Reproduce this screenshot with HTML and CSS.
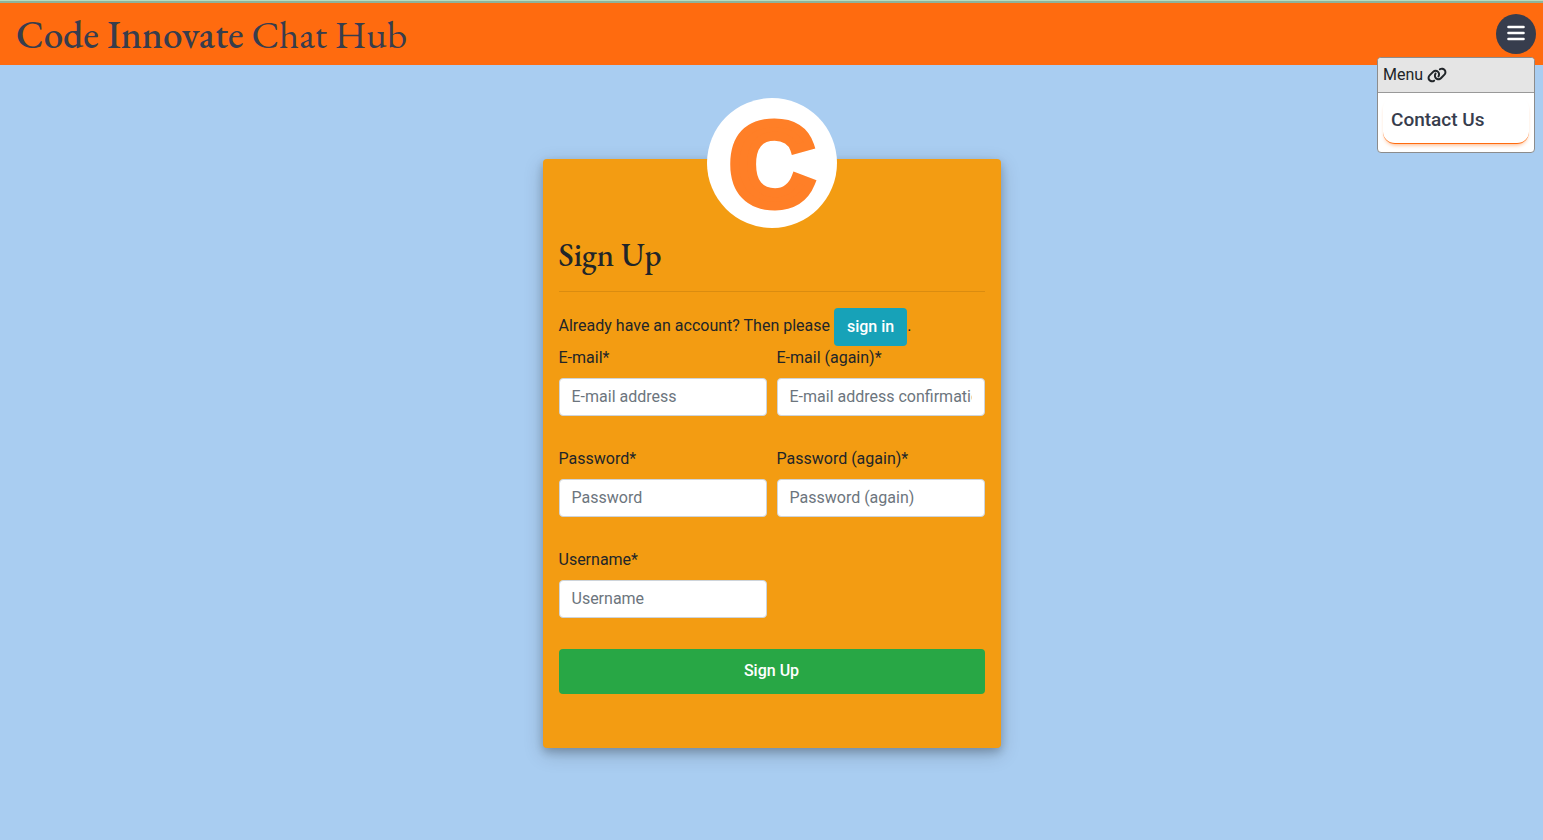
FILE: index.html
```html
<!DOCTYPE html>
<html lang="en">
<head>
<meta charset="utf-8">
<meta name="viewport" content="width=device-width, initial-scale=1">
<title>Code Innovate Chat Hub</title>
<link rel="stylesheet" href="styles.css">
</head>
<body>
<header class="topbar">
  <a class="brand" href="#"><span class="brand-strong">Code Innovate</span> Chat Hub</a>
  <div class="menu">
    <button class="menu-toggle" type="button" aria-label="Menu" aria-expanded="true">
      <svg width="18" height="16" viewBox="0 0 18 16" fill="none" stroke="currentColor" stroke-width="2.6" stroke-linecap="round"><path d="M1.5 2h15M1.5 8h15M1.5 14h15"/></svg>
    </button>
    <nav class="dropdown">
      <div class="dropdown-title">Menu
        <svg class="link-icon" width="20" height="16" viewBox="0 0 640 512" fill="currentColor" aria-hidden="true"><path d="M579.8 267.7c56.500-56.500 56.500-148 0-204.500c-50-50-128.800-56.500-186.300-15.400l-1.600 1.100c-14.400 10.300-17.700 30.300-7.400 44.600s30.300 17.700 44.600 7.400l1.600-1.100c32.100-22.900 76-19.300 103.800 8.600c31.500 31.500 31.500 82.500 0 114L422.300 334.800c-31.500 31.500-82.500 31.500-114 0c-27.900-27.900-31.500-71.800-8.600-103.800l1.100-1.600c10.300-14.400 6.900-34.400-7.400-44.600s-34.400-6.900-44.600 7.400l-1.100 1.600C206.500 251.200 213 330 263 380c56.500 56.500 148 56.500 204.500 0L579.800 267.700zM60.200 244.300c-56.500 56.500-56.500 148 0 204.500c50 50 128.800 56.500 186.300 15.400l1.600-1.100c14.400-10.300 17.700-30.300 7.400-44.600s-30.300-17.700-44.600-7.400l-1.600 1.100c-32.100 22.900-76 19.300-103.800-8.600C74 372 74 321 105.500 289.500L217.700 177.200c31.500-31.500 82.500-31.500 114 0c27.900 27.900 31.500 71.800 8.600 103.900l-1.100 1.600c-10.300 14.400-6.900 34.400 7.400 44.600s34.400 6.900 44.600-7.400l1.100-1.600C433.500 260.800 427 182 377 132c-56.500-56.500-148-56.500-204.500 0L60.200 244.300z"/></svg>
      </div>
      <a class="dropdown-item" href="#">Contact Us</a>
    </nav>
  </div>
</header>

<main class="page">
  <section class="card">
    <svg class="logo" width="130" height="130" viewBox="0 0 130 130" role="img" aria-label="Code Innovate">
      <circle cx="65" cy="65" r="65" fill="#fff"/>
      <text class="logo-letter" x="65" y="107" text-anchor="middle">C</text>
    </svg>
    <h1 class="card-title">Sign Up</h1>
    <hr class="rule">
    <p class="hint">Already have an account? Then please <a class="btn btn-info" href="#">sign in</a>.</p>
    <form class="form">
      <div class="field"><label for="email">E-mail*</label><input id="email" type="email" placeholder="E-mail address"></div>
      <div class="field"><label for="email2">E-mail (again)*</label><input id="email2" type="email" placeholder="E-mail address confirmation"></div>
      <div class="field"><label for="pw">Password*</label><input id="pw" type="password" placeholder="Password"></div>
      <div class="field"><label for="pw2">Password (again)*</label><input id="pw2" type="password" placeholder="Password (again)"></div>
      <div class="field"><label for="user">Username*</label><input id="user" type="text" placeholder="Username"></div>
      <button class="btn btn-submit" type="submit">Sign Up</button>
    </form>
  </section>
</main>
</body>
</html>
```
FILE: styles.css
```css
* { box-sizing: border-box; }

body {
  margin: 0;
  min-height: 100vh;
  background: #a9cdf1;
  color: #212529;
  font-family: Roboto, "Liberation Sans", sans-serif;
  font-size: 16px;
  font-weight: 400;
  line-height: 24px;
}

.topbar {
  display: flex;
  align-items: center;
  justify-content: space-between;
  height: 65px;
  padding: 3px 7px 0 16px;
  background: linear-gradient(#b9dcc0 1px, #8fb39a 1px, #8fb39a 3px, #ff6b0f 3px);
}

.brand {
  padding-top: 2px;
  color: #373d4d;
  font-family: "EB Garamond", "Liberation Serif", serif;
  font-size: 39px;
  line-height: 48px;
  font-weight: 400;
  text-decoration: none;
}

.brand-strong { font-weight: 500; }

.menu { position: relative; }

.menu-toggle {
  display: flex;
  align-items: center;
  justify-content: center;
  width: 40px;
  height: 40px;
  padding: 0 0 2px;
  border: 0;
  border-radius: 50%;
  background: #373d4d;
  color: #fff;
}

.dropdown {
  position: absolute;
  top: 43px;
  right: 1px;
  width: 158px;
  overflow: hidden;
  border: 1px solid #8c8c8c;
  border-radius: 4px;
  background: #fff;
}

.dropdown-title {
  display: flex;
  align-items: center;
  gap: 4px;
  height: 35px;
  padding: 0 5px;
  border-bottom: 1px solid #999;
  background: #e5e5e5;
}

.dropdown-item {
  display: block;
  margin: 4px 5px 8px;
  padding: 11px 8px;
  border-bottom: 1px solid #ff6b0f;
  border-radius: 12px;
  box-shadow: 0 3px 4px -2px #ffb380;
  color: #373d4d;
  font-size: 19px;
  font-weight: 500;
  text-decoration: none;
}

.page { padding: 94px 16px 92px; }

.card {
  display: flex;
  flex-direction: column;
  max-width: 458px;
  margin: 0 auto;
  padding: 0 16px 54px;
  border-radius: 4px;
  background: #f39c12;
  box-shadow: 0 4px 8px rgba(0, 0, 0, 0.2), 0 6px 20px rgba(0, 0, 0, 0.19);
}

.logo {
  align-self: center;
  margin-top: -61px;
  overflow: visible;
}

.logo-letter {
  fill: #ff7f27;
  stroke: #ff7f27;
  stroke-width: 9px;
  font-family: "Liberation Sans", sans-serif;
  font-size: 116px;
  font-weight: 700;
}

.card-title {
  margin: 8px 0 16px;
  font-family: "EB Garamond", "Liberation Serif", serif;
  font-size: 32px;
  font-weight: 500;
  line-height: 39px;
}

.rule {
  width: 100%;
  margin: 0 0 16px;
  border: 0;
  border-top: 1px solid rgba(0, 0, 0, 0.1);
}

.hint { margin: 0; }

.btn {
  padding: 6px 12px;
  border: 1px solid transparent;
  border-radius: 4px;
  color: #fff;
  font-family: inherit;
  font-size: 16px;
  font-weight: 500;
  line-height: 24px;
  text-align: center;
  text-decoration: none;
}

.btn-info {
  display: inline-block;
  vertical-align: middle;
  background: #17a2b8;
}

.form {
  display: grid;
  grid-template-columns: 1fr 1fr;
  gap: 31px 10px;
}

.field {
  display: flex;
  flex-direction: column;
  gap: 8px;
  min-width: 0;
}

.field input {
  width: 100%;
  height: 38px;
  padding: 5px 12px 7px;
  border: 1px solid #ced4da;
  border-radius: 4px;
  background: #fff;
  color: #495057;
  font: inherit;
}

.field input::placeholder { color: #6c757d; opacity: 1; }

.btn-submit {
  grid-column: 1 / -1;
  height: 45px;
  padding: 5px 12px 7px;
  background: #28a745;
}
```
